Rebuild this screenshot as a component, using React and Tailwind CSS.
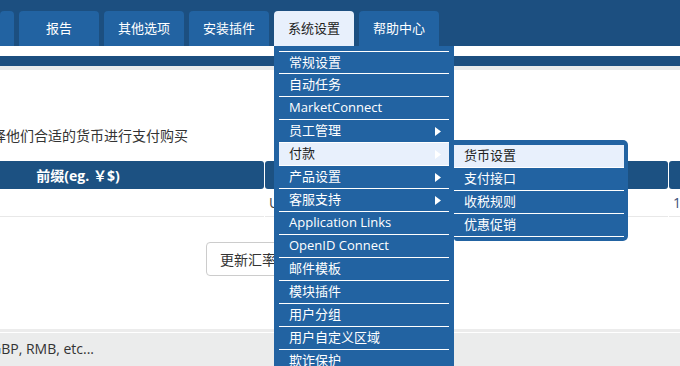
import React from "react";

const FONT = { fontFamily: '"Open Sans", "Noto Sans CJK SC", sans-serif' };

function Arrow() {
  return (
    <svg width="6" height="9" viewBox="0 0 6 9" className="ml-auto mr-[8px] shrink-0">
      <path d="M0 0 L6 4.5 L0 9 Z" fill="#ffffff" />
    </svg>
  );
}

const mainItems = [
  { t: "常规设置" },
  { t: "自动任务" },
  { t: "MarketConnect" },
  { t: "员工管理", arrow: true },
  { t: "付款", arrow: true, active: true },
  { t: "产品设置", arrow: true },
  { t: "客服支持", arrow: true },
  { t: "Application Links" },
  { t: "OpenID Connect" },
  { t: "邮件模板" },
  { t: "模块插件" },
  { t: "用户分组" },
  { t: "用户自定义区域" },
  { t: "欺诈保护" },
];

const subItems = [
  { t: "货币设置", active: true },
  { t: "支付接口" },
  { t: "收税规则" },
  { t: "优惠促销" },
];

function Dropdown() {
  return (
    <div className="absolute left-0 top-full w-[180px] bg-[#2263a2] px-[5px] pt-[5px] z-20">
      <ul className="border-t border-white">
        {mainItems.map((it, i) => (
          <li
            key={it.t}
            className={
              (i === 0 ? "h-[22px] " : "h-[23px] ") +
              "flex items-center border-b border-white pl-[10px] text-[13px] " +
              (it.active ? "bg-[#e8f0fc] text-[#222]" : "text-white")
            }
          >
            <span>{it.t}</span>
            {it.arrow && <Arrow />}
          </li>
        ))}
      </ul>
      <div className="absolute left-[180px] top-[94px] w-[174px] bg-[#2263a2] pr-[4px] pt-[5px] pb-[4px] rounded-r-[5px] rounded-bl-[3px]">
        <ul>
          {subItems.map((it) => (
            <li
              key={it.t}
              className={
                "h-[23px] flex items-center border-b border-white pl-[10px] text-[13px] " +
                (it.active ? "bg-[#e8f0fc] text-[#222]" : "text-white")
              }
            >
              {it.t}
            </li>
          ))}
        </ul>
      </div>
    </div>
  );
}

function Tab({ label, active, children, w = "w-[80px]" }) {
  return (
    <div
      className={
        "relative h-[35px] " +
        w +
        " rounded-t-[4px] flex items-center justify-center text-[13px] " +
        (active ? "bg-[#e8f0fc] text-[#222]" : "bg-[#2263a2] text-white")
      }
    >
      {label}
      {children}
    </div>
  );
}

export default function App() {
  return (
    <div className="relative w-[680px] h-[366px] overflow-hidden bg-white" style={FONT}>
      {/* top nav */}
      <div className="h-[46px] bg-[#1c4f80] flex items-end gap-[5px]">
        <Tab label="" w="w-[14px]" />
        <Tab label="报告" />
        <Tab label="其他选项" />
        <Tab label="安装插件" />
        <Tab label="系统设置" active>
          <Dropdown />
        </Tab>
        <Tab label="帮助中心" />
      </div>
      <div className="h-[10px] bg-white" />
      <div className="h-[10px] bg-[#1c4f80]" />
      <div className="h-[4px] bg-[#e9ebec]" />

      {/* content */}
      <div className="overflow-hidden">
        <p className="mt-[56px] -ml-[8px] h-[20px] leading-[20px] text-[14px] text-[#333] whitespace-nowrap">
          择他们合适的货币进行支付购买
        </p>
        <div className="-ml-[108px] w-[900px] mt-[15px]">
          <div className="flex gap-[1px] h-[28px]">
            <div className="w-[372px] bg-[#1c5182] rounded-[3px] flex items-center justify-center text-white font-bold text-[14px]">
              前缀(eg. ￥$)
            </div>
            <div className="w-[403px] bg-[#1c5182] rounded-[3px]" />
            <div className="w-[100px] bg-[#1c5182] rounded-[3px]" />
          </div>
          <div className="flex gap-[1px] h-[28px] text-[14px] text-[#444]">
            <div className="w-[372px] border-b border-[#e8e8e8]" />
            <div className="w-[403px] border-b border-[#e8e8e8] flex items-center pl-[4px]">USD</div>
            <div className="w-[100px] border-b border-[#e8e8e8] flex items-center pl-[4px] text-[#3b4f78]">1</div>
          </div>
        </div>
        <div className="mt-[25px] ml-[206px] flex">
          <button className="h-[34px] px-[13px] border border-[#ccc] rounded-[4px] bg-white text-[14px] text-[#333]">
            更新汇率
          </button>
        </div>
      </div>

      {/* footer panel */}
      <div className="mt-[53px] border-t-[3px] border-[#ececec]">
        <div className="h-[1px] bg-white" />
        <div className="h-[40px] bg-[#ebecec] pt-[6px] overflow-hidden">
          <p className="-ml-[9px] text-[14px] leading-[20px] text-[#333] whitespace-nowrap">GBP, RMB, etc...</p>
        </div>
      </div>
    </div>
  );
}
